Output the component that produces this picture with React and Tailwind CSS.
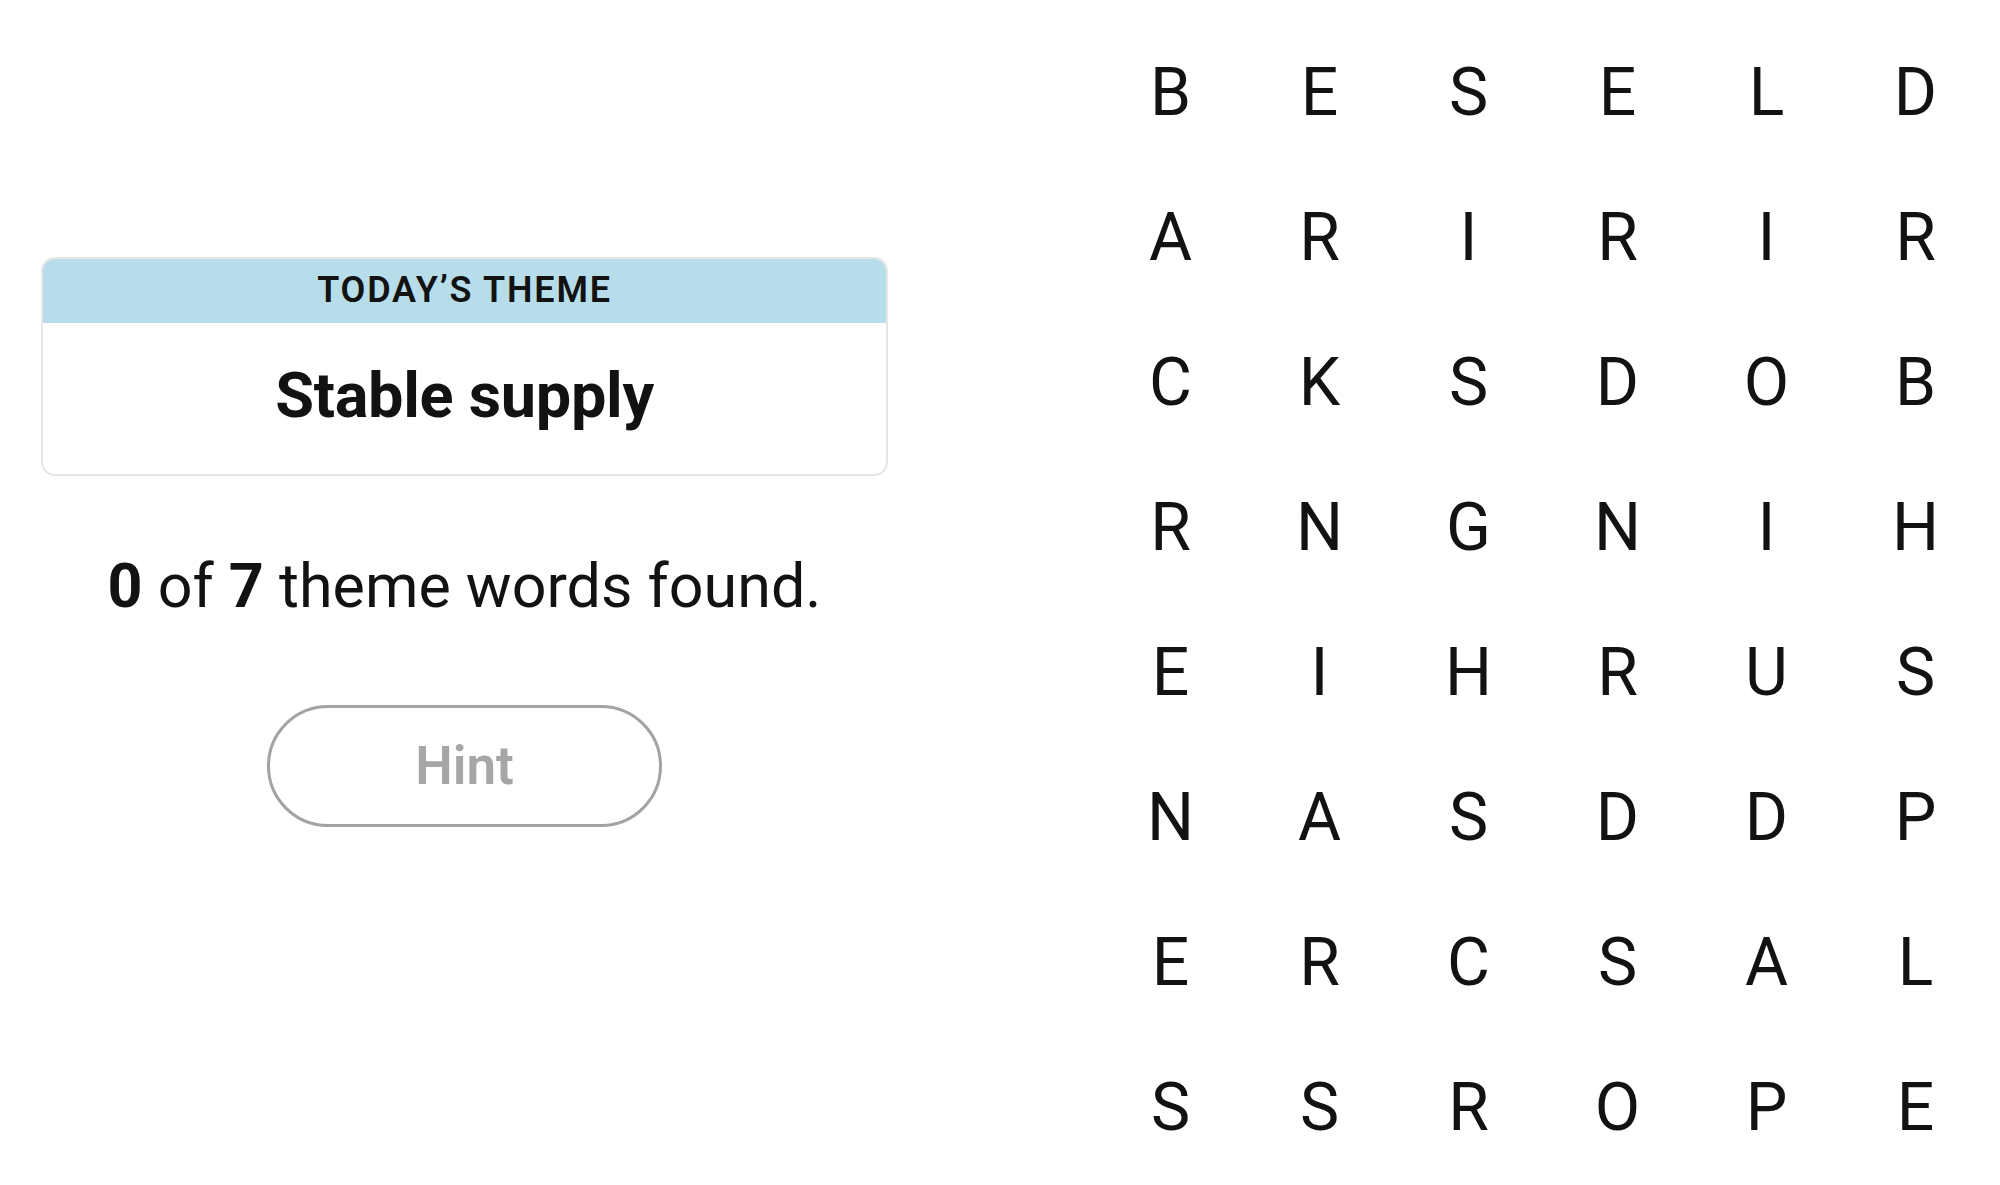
const letters = [
  ["B", "E", "S", "E", "L", "D"],
  ["A", "R", "I", "R", "I", "R"],
  ["C", "K", "S", "D", "O", "B"],
  ["R", "N", "G", "N", "I", "H"],
  ["E", "I", "H", "R", "U", "S"],
  ["N", "A", "S", "D", "D", "P"],
  ["E", "R", "C", "S", "A", "L"],
  ["S", "S", "R", "O", "P", "E"],
];

const found = 0;
const total = 7;

const App = () => {
  return (
    <main className="flex min-h-[1185px] w-[2000px] bg-white font-['Roboto',_'Liberation_Sans',_sans-serif] text-[#121212]">
      {/* left side: theme + progress + hint */}
      <section className="flex w-[929px] flex-col items-center px-[41px] pt-[257px]">
        <div className="w-full overflow-hidden rounded-[14px] border-2 border-[#e6e6e6]">
          <div className="-mx-[2px] -mt-[2px] flex h-[66px] items-center justify-center bg-[#b6dde9]">
            <h2 className="text-[36px] font-semibold uppercase leading-none tracking-[1.8px]">
              Today’s Theme
            </h2>
          </div>
          <div className="flex h-[151px] items-center justify-center pb-[6px]">
            <h1 className="text-[63px] font-bold leading-none tracking-[-0.3px]">
              Stable supply
            </h1>
          </div>
        </div>

        <p className="mt-[80px] text-[61px] leading-none">
          <strong className="font-bold">{found}</strong> of{" "}
          <strong className="font-bold">{total}</strong> theme words found.
        </p>

        <button className="mt-[88px] flex h-[122px] w-[395px] items-center justify-center rounded-full border-[3px] border-[#a3a3a3] bg-white text-[53px] font-semibold leading-none text-[#a6a6a6]">
          Hint
        </button>
      </section>

      {/* right side: letter board */}
      <section className="ml-[167px] pt-[20px]">
        <div className="grid grid-cols-[repeat(6,149px)] grid-rows-[repeat(8,145px)]">
          {letters.flat().map((ch, i) => (
            <span
              key={i}
              className="flex items-center justify-center text-[66px] font-normal leading-none"
            >
              {ch}
            </span>
          ))}
        </div>
      </section>
    </main>
  );
};

export default App;
